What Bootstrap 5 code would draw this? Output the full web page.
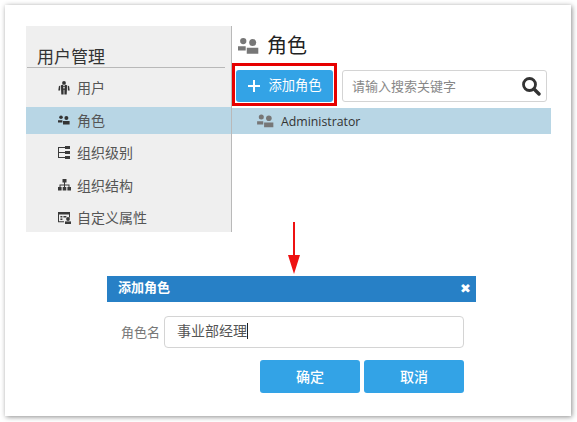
<!DOCTYPE html>
<html lang="zh-CN">
<head>
  <meta charset="UTF-8">
  <meta name="viewport" content="width=device-width, initial-scale=1.0">
  <title>添加角色</title>
  <link href="https://cdn.jsdelivr.net/npm/bootstrap@5.3.0/dist/css/bootstrap.min.css" rel="stylesheet">
  <style>
    html, body { height: 100%; }
    body {
      background-color: #fff;
      font-family: "Open Sans", "Noto Sans CJK SC", sans-serif;
      color: #333;
      overflow: hidden;
    }
    .sheet {
      width: 566px;
      height: 411px;
      margin: 5px 0 0 5px;
      padding: 21px 20px 0 21px;
      background: #fff;
      box-shadow: 1px 1px 5px rgba(0,0,0,.45);
    }
    .side-pane {
      width: 206px;
      height: 206px;
      background: #efefef;
      border-right: 1px solid #b9b9b9;
      overflow: hidden;
    }
    .side-title {
      height: 42px;
      margin: 0 6px 0 1px;
      padding: 20px 0 0 10px;
      font-size: 17px;
      line-height: 22px;
      color: #333;
      border-bottom: 1px solid #b8b8b8;
    }
    .side-list { padding-top: 6px; }
    .side-item {
      height: 27px;
      margin-bottom: 5.5px;
      padding-left: 32px;
      font-size: 14px;
      line-height: 27px;
      color: #555;
      gap: 7px;
    }
    .side-item.on { background: #b8d6e5; }
    .ico-box { width: 12px; flex: none; line-height: 0; }
    .main-pane { width: 319px; }
    .head-row { height: 37px; padding: 2px 0 0 6px; gap: 8px; font-size: 20px; color: #222; }
    .tool-row { gap: 5px; height: 45px; }
    .red-box { border: 3px solid #e60000; padding: 4px 1px 1px 1px; width: 105px; height: 43px; }
    .add-btn, .blue-btn {
      background: #33a3e6;
      border: 0;
      border-radius: 3px;
      color: #fff;
    }
    .add-btn { width: 97px; height: 32px; padding: 0 0 0 1px; font-size: 13.3px; gap: 8px; }
    .add-btn:hover, .blue-btn:hover { background: #2f98d8; color: #fff; }
    .search-box { position: relative; width: 205px; height: 32px; margin-top: 7px; }
    .search-box input {
      height: 32px;
      padding: 0 34px 0 9px;
      font-size: 13px;
      border-radius: 3px;
      border-color: #d4d4d4;
    }
    .search-box input::placeholder { color: #888; }
    .search-box svg { position: absolute; right: 6px; top: 6px; }
    .role-row {
      height: 26px;
      padding-left: 25px;
      background: #b8d6e5;
      font-size: 12.3px;
      color: #333;
      gap: 7px;
    }
    .role-name { padding-top: 2px; }
    .arrow-wrap { margin: -10px 0 2px 262px; height: 52px; line-height: 0; }
    .dlg { width: 369px; margin-left: 81px; }
    .dlg-head {
      height: 26px;
      padding: 0 5px 2px 11px;
      background: #2780c6;
      color: #fff;
      font-size: 13px;
      font-weight: 700;
    }
    .dlg-close { font-size: 13px; line-height: 1; font-weight: 700; font-family: "DejaVu Sans", sans-serif; }
    .name-row { margin-top: 14px; }
    .name-label { width: 57px; padding: 2px 4px 0 0; text-align: right; font-size: 13px; color: #777; }
    .name-field {
      width: 300px;
      height: 32px;
      padding: 0 12px;
      border: 1px solid #d4d4d4;
      border-radius: 4px;
      font-size: 14px;
      color: #555;
      line-height: 28px;
    }
    .caret-bar { display: inline-block; width: 1px; height: 16px; background: #222; vertical-align: -3px; }
    .btn-row { gap: 4px; margin: 12px 12px 0 0; }
    .blue-btn { width: 100px; height: 33px; padding: 0; font-size: 14px; font-weight: 500; }
  </style>
</head>
<body>
  <div class="sheet">
    <div class="d-flex">
      <div class="side-pane flex-none">
        <div class="side-title">用户管理</div>
        <div class="side-list">
          <div class="side-item d-flex align-items-center">
            <span class="ico-box">
              <svg width="12" height="14" viewBox="0 0 12 14" fill="#333"><circle cx="6" cy="1.9" r="1.9"/><path d="M3 4.2 4.6 3.8 6 5.2 7.4 3.8 9 4.2 8.9 9 8.7 13.5H6.4V9H5.6V13.5H3.3L3.1 9z"/><path d="M2.3 4.4 2.1 9.6H.3L.9 5.2zM9.7 4.4 9.9 9.6H11.7L11.1 5.2z"/><path d="M6 5.2 5.4 6.2 6 9 6.6 6.2z" fill="#efefef"/></svg>
            </span>
            <span>用户</span>
          </div>
          <div class="side-item on d-flex align-items-center">
            <span class="ico-box">
              <svg width="12" height="10" viewBox="0 0 12 10" fill="#333"><circle cx="3" cy="2.2" r="1.8"/><circle cx="8.4" cy="3" r="2"/><path d="M0 5.2H4.4V7.5H0zM5 6h6.6v3.4H5z"/></svg>
            </span>
            <span>角色</span>
          </div>
          <div class="side-item d-flex align-items-center">
            <span class="ico-box">
              <svg width="12" height="13" viewBox="0 0 12 13" fill="#3a3a3a"><path d="M0 1h7v1H1v4h6v1H1v4h6v1H0z"/><path d="M7 0h5v3H7zM7 5h5v3H7zM7 10h5v3H7z"/></svg>
            </span>
            <span>组织级别</span>
          </div>
          <div class="side-item d-flex align-items-center">
            <span class="ico-box">
              <svg width="13" height="12" viewBox="0 0 13 12" fill="#3a3a3a"><path d="M4.5 0h4v3.4h-4zM6 3.4h1V5.4h4.5V8h-1V6.4H7V8H6V6.4H2.5V8h-1V5.4H6z"/><path d="M0 8h3.6v3.6H0zM4.7 8h3.6v3.6H4.7zM9.4 8H13v3.6H9.4z"/></svg>
            </span>
            <span>组织结构</span>
          </div>
          <div class="side-item d-flex align-items-center">
            <span class="ico-box">
              <svg width="14" height="12" viewBox="0 0 14 12" fill="#3a3a3a"><path d="M0 0h12v5.6h-1V2.6H1v6.6h5v1H0z"/><path d="M2.4 4h2v1.4h-2zM5.4 4h3v1.4h-3zM2.4 6.6h2V8h-2z"/><circle cx="10" cy="7" r="1.9"/><path d="M7 9.4h6V12H7z"/></svg>
            </span>
            <span>自定义属性</span>
          </div>
        </div>
      </div>
      <div class="main-pane">
        <div class="head-row d-flex align-items-center">
          <svg width="21" height="18" viewBox="0 0 12 10" fill="#777"><circle cx="3" cy="2.2" r="1.8"/><circle cx="8.4" cy="3" r="2"/><path d="M0 5.2H4.4V7.5H0zM5 6h6.6v3.4H5z"/></svg>
          <span>角色</span>
        </div>
        <div class="tool-row d-flex">
          <div class="red-box">
            <button type="button" class="btn add-btn d-flex align-items-center justify-content-center">
              <svg width="12" height="12" viewBox="0 0 12 12" fill="#fff"><path d="M5 0h2v5h5v2H7v5H5V7H0V5h5z"/></svg>
              <span>添加角色</span>
            </button>
          </div>
          <div class="search-box">
            <input type="text" class="form-control" placeholder="请输入搜索关键字">
            <svg width="20" height="20" viewBox="0 0 20 20" fill="none" stroke="#333" stroke-width="2.8"><circle cx="8.5" cy="8.5" r="6"/><path d="M13 13l5 5" stroke-linecap="round" stroke-width="3.4"/></svg>
          </div>
        </div>
        <div class="role-row d-flex align-items-center">
          <svg width="17" height="14" viewBox="0 0 12 10" fill="#777"><circle cx="3" cy="2.2" r="1.8"/><circle cx="8.4" cy="3" r="2"/><path d="M0 5.2H4.4V7.5H0zM5 6h6.6v3.4H5z"/></svg>
          <span class="role-name">Administrator</span>
        </div>
      </div>
    </div>

    <div class="arrow-wrap">
      <svg width="12" height="52" viewBox="0 0 12 52"><path d="M5 0h2v33h5L6 52 0 33h5z" fill="#ee1111"/></svg>
    </div>

    <div class="dlg">
      <div class="dlg-head d-flex align-items-center justify-content-between">
        <span>添加角色</span>
        <span class="dlg-close">✖</span>
      </div>
      <div class="name-row d-flex align-items-center">
        <span class="name-label">角色名</span>
        <div class="name-field">事业部经理<span class="caret-bar"></span></div>
      </div>
      <div class="btn-row d-flex justify-content-end">
        <button type="button" class="btn blue-btn">确定</button>
        <button type="button" class="btn blue-btn">取消</button>
      </div>
    </div>
  </div>
  <script src="https://cdn.jsdelivr.net/npm/bootstrap@5.3.0/dist/js/bootstrap.bundle.min.js"></script>
</body>
</html>
